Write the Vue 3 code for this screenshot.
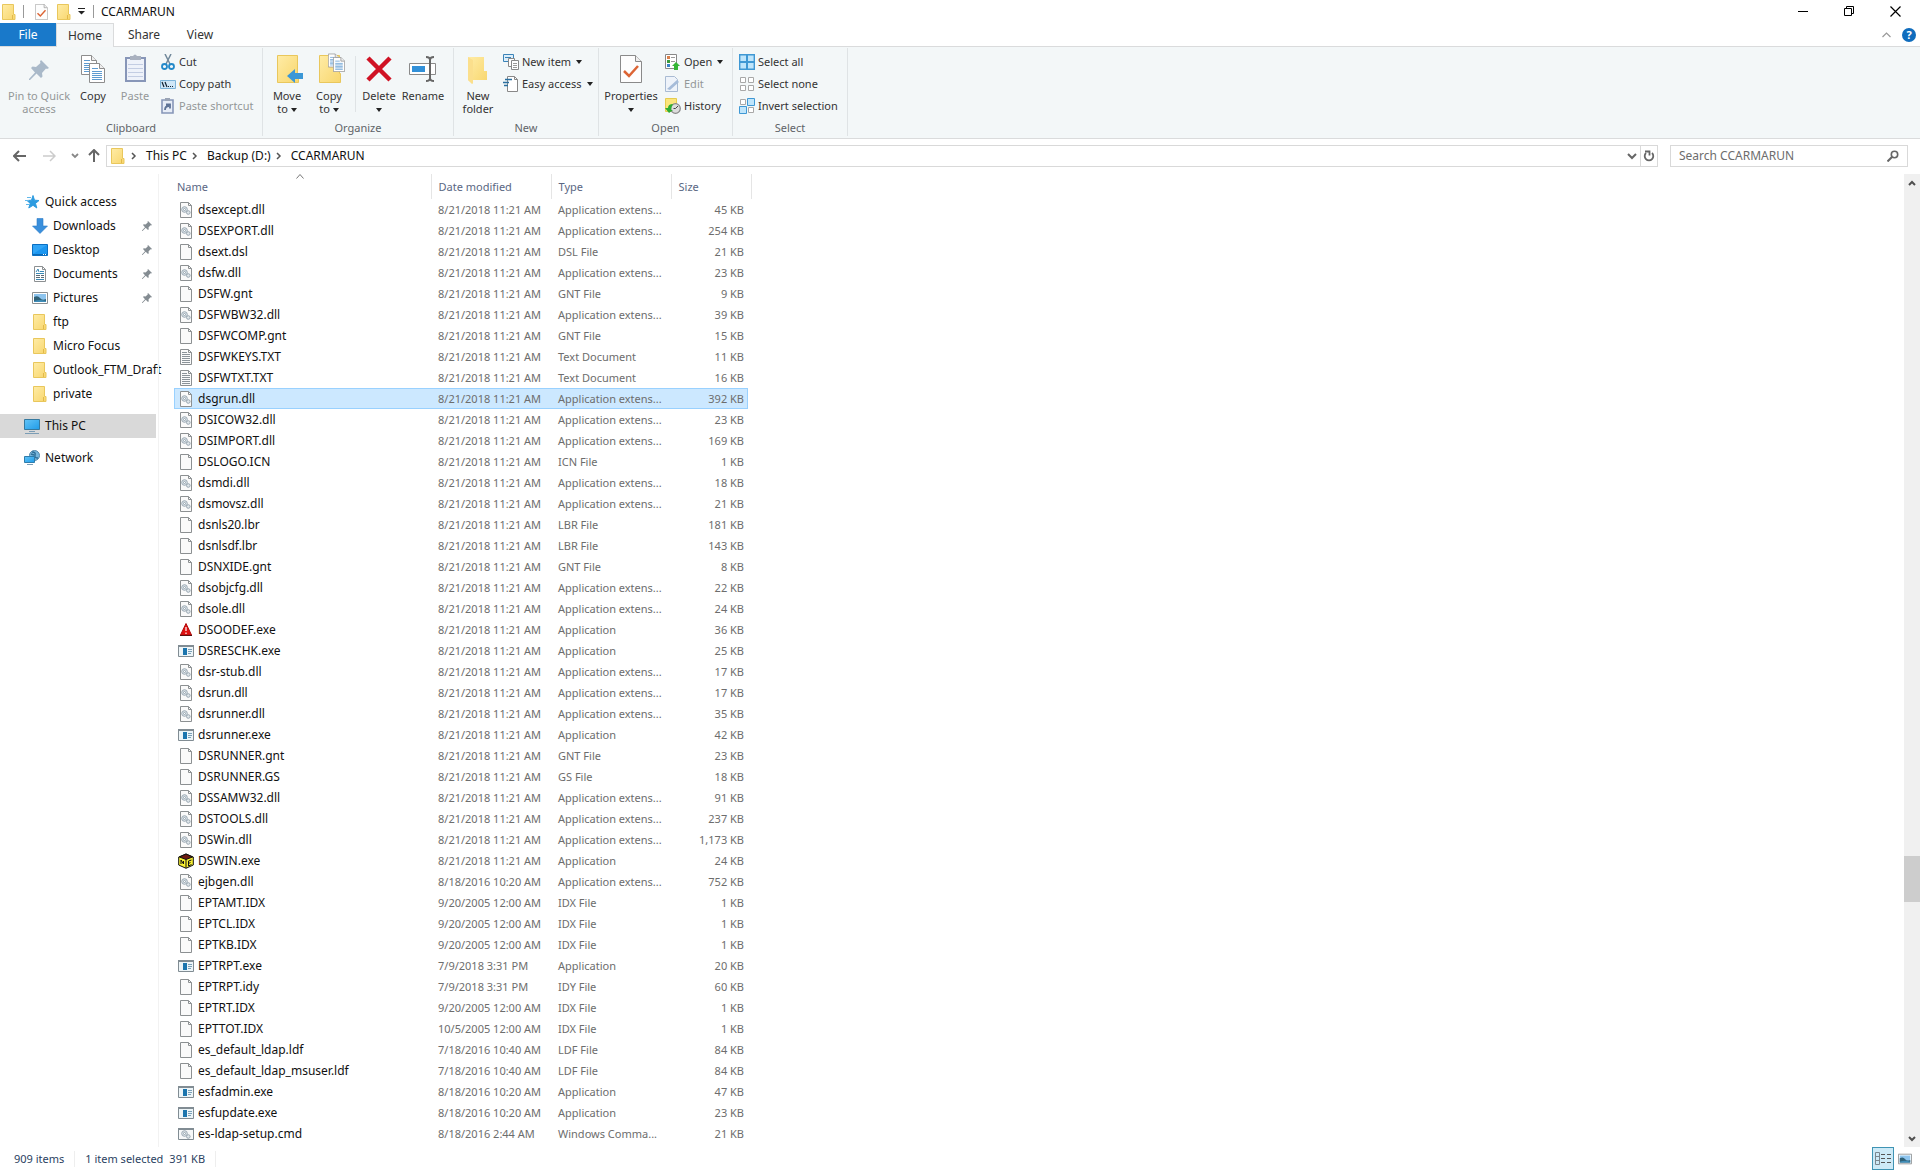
<script setup>
const raw = `dll|dsexcept.dll|a|e|45
dll|DSEXPORT.dll|a|e|254
doc|dsext.dsl|a|DSL File|21
dll|dsfw.dll|a|e|23
doc|DSFW.gnt|a|GNT File|9
dll|DSFWBW32.dll|a|e|39
doc|DSFWCOMP.gnt|a|GNT File|15
txt|DSFWKEYS.TXT|a|Text Document|11
txt|DSFWTXT.TXT|a|Text Document|16
dll|dsgrun.dll|a|e|392
dll|DSICOW32.dll|a|e|23
dll|DSIMPORT.dll|a|e|169
doc|DSLOGO.ICN|a|ICN File|1
dll|dsmdi.dll|a|e|18
dll|dsmovsz.dll|a|e|21
doc|dsnls20.lbr|a|LBR File|181
doc|dsnlsdf.lbr|a|LBR File|143
doc|DSNXIDE.gnt|a|GNT File|8
dll|dsobjcfg.dll|a|e|22
dll|dsole.dll|a|e|24
warn|DSOODEF.exe|a|Application|36
exe|DSRESCHK.exe|a|Application|25
dll|dsr-stub.dll|a|e|17
dll|dsrun.dll|a|e|17
dll|dsrunner.dll|a|e|35
exe|dsrunner.exe|a|Application|42
doc|DSRUNNER.gnt|a|GNT File|23
doc|DSRUNNER.GS|a|GS File|18
dll|DSSAMW32.dll|a|e|91
dll|DSTOOLS.dll|a|e|237
dll|DSWin.dll|a|e|1,173
cube|DSWIN.exe|a|Application|24
dll|ejbgen.dll|8/18/2016 10:20 AM|e|752
doc|EPTAMT.IDX|9/20/2005 12:00 AM|IDX File|1
doc|EPTCL.IDX|9/20/2005 12:00 AM|IDX File|1
doc|EPTKB.IDX|9/20/2005 12:00 AM|IDX File|1
exe|EPTRPT.exe|7/9/2018 3:31 PM|Application|20
doc|EPTRPT.idy|7/9/2018 3:31 PM|IDY File|60
doc|EPTRT.IDX|9/20/2005 12:00 AM|IDX File|1
doc|EPTTOT.IDX|10/5/2005 12:00 AM|IDX File|1
doc|es_default_ldap.ldf|7/18/2016 10:40 AM|LDF File|84
doc|es_default_ldap_msuser.ldf|7/18/2016 10:40 AM|LDF File|84
exe|esfadmin.exe|8/18/2016 10:20 AM|Application|47
exe|esfupdate.exe|8/18/2016 10:20 AM|Application|23
cmd|es-ldap-setup.cmd|8/18/2016 2:44 AM|Windows Comma...|21`
const files = raw.split('\n').map((line) => {
  const [icon, name, date, type, size] = line.split('|')
  return {
    icon,
    name,
    date: date === 'a' ? '8/21/2018 11:21 AM' : date,
    type: type === 'e' ? 'Application extens...' : type,
    size: size + ' KB',
  }
})
const selected = 'dsgrun.dll'
const quick = [
  { icon: 'down', label: 'Downloads', pin: true },
  { icon: 'desk', label: 'Desktop', pin: true },
  { icon: 'docs', label: 'Documents', pin: true },
  { icon: 'pics', label: 'Pictures', pin: true },
  { icon: 'folder', label: 'ftp' },
  { icon: 'folder', label: 'Micro Focus' },
  { icon: 'folder', label: 'Outlook_FTM_Draft' },
  { icon: 'folder', label: 'private' },
]
const crumbs = ['This PC', 'Backup (D:)', 'CCARMARUN']
</script>

<template>
  <div class="window">
    <svg class="defs" width="0" height="0" aria-hidden="true">
      <defs>
        <linearGradient id="gold" x1="0" y1="0" x2="1" y2="1">
          <stop offset="0" stop-color="#ffeca6" /><stop offset="1" stop-color="#f8d66d" />
        </linearGradient>
        <linearGradient id="screen" x1="0" y1="0" x2="1" y2="1">
          <stop offset="0" stop-color="#63c4f7" /><stop offset="1" stop-color="#1f9ce9" />
        </linearGradient>
      </defs>
      <symbol id="folder" viewBox="0 0 16 16">
        <path d="M1.500.5h11v10h1.500v5h-12.500z" fill="url(#gold)" stroke="#e9c75c" />
        <path d="M11.500 11v4" stroke="#e2b94a" fill="none" />
      </symbol>
      <symbol id="doc" viewBox="0 0 16 16">
        <path d="M2.500.5h8l3 3v12h-11z" fill="#fafafa" stroke="#8c9092" />
        <path d="M10.500.5v3h3" fill="none" stroke="#8c9092" />
      </symbol>
      <symbol id="gears" viewBox="0 0 10 9">
        <circle cx="3.500" cy="3.500" r="2.800" fill="#dfe6ea" stroke="#9aa8b3" />
        <circle cx="3.500" cy="3.500" r="1" fill="#fff" stroke="#8798a5" stroke-width=".8" />
        <circle cx="7.300" cy="6.500" r="1.800" fill="#dfe6ea" stroke="#9aa8b3" />
      </symbol>
      <symbol id="dll" viewBox="0 0 16 16">
        <use href="#doc" width="16" height="16" />
        <use href="#gears" x="3" y="4" width="10" height="9" />
      </symbol>
      <symbol id="txt" viewBox="0 0 16 16">
        <use href="#doc" width="16" height="16" />
        <path d="M4 3.500h5M4 5.500h8M4 7.500h8M4 9.500h8M4 11.500h8M4 13.500h8" stroke="#8b9399" />
      </symbol>
      <symbol id="exe" viewBox="0 0 16 16">
        <path d="M.5 2.500h15v11H.5z" fill="#edf5f8" stroke="#818c93" />
        <path d="M0 3h16" stroke="#818c93" stroke-width="2" />
        <path d="M5 5h4v7H5z" fill="#1b75ae" />
        <path d="M10 6.500h4M10 8.500h4M10 10.500h3" stroke="#7aa0b8" />
      </symbol>
      <symbol id="cmd" viewBox="0 0 16 16">
        <path d="M.5 2.500h15v11H.5z" fill="#f6f8f9" stroke="#818c93" />
        <path d="M0 3h16" stroke="#818c93" stroke-width="2" />
        <use href="#gears" x="3" y="4" width="10" height="9" />
      </symbol>
      <symbol id="warn" viewBox="0 0 16 16">
        <path d="M8 1.500 13.500 13h-11z" fill="#e01010" stroke="#b00a0a" />
        <path d="M2 13.500h12" stroke="#5a1010" />
        <path d="M8 5v4M8 10.500v1.500" stroke="#fff" stroke-width="1.200" />
      </symbol>
      <symbol id="cube" viewBox="0 0 16 16">
        <path d="M8 1 15.300 4v8L8 15.300.7 12V4z" fill="#f8f032" stroke="#111" />
        <path d="M8 1 14.500 4 8 6.500 1.500 4z" fill="#6d1a12" stroke="#111" />
        <path d="M8 6.500V15M3 11V7l2.500 4V8M10.500 13V8l3-1M10.500 10.500l2-1M10.500 13l3-1.500" stroke="#111" fill="none" />
      </symbol>
      <symbol id="down" viewBox="0 0 16 16">
        <path d="M5 .5h6V8h4.500L8 15.500.5 8H5z" fill="#3a8fdc" stroke="#2b7cc8" stroke-width=".6" />
      </symbol>
      <symbol id="desk" viewBox="0 0 16 16">
        <path d="M.5 2.500h15v11H.5z" fill="#1b96f0" stroke="#0a6fc2" />
        <path d="M1 3h14L1 12z" fill="#3aabf8" opacity=".7" />
        <path d="M1 12.500h14" stroke="#0b69b5" /><path d="M11 12.500h3" stroke="#fff" stroke-dasharray="1 1" />
      </symbol>
      <symbol id="docs" viewBox="0 0 16 16">
        <path d="M2.500.5h8l3 3v12h-11z" fill="#fff" stroke="#8c9092" />
        <path d="M10.500.5v3h3" fill="none" stroke="#8c9092" />
        <path d="m4 6 2-3 1 3M8 5.500h4M4 7.500h8M4 13.500h8" stroke="#3a89b5" fill="none" />
        <path d="M4 9.500h4M9 9.500h3M4 11.500h4M9 11.500h3" stroke="#596a75" />
      </symbol>
      <symbol id="pics" viewBox="0 0 16 16">
        <path d="M.5 2.500h15v11H.5z" fill="#fff" stroke="#8c9092" />
        <path d="M2 4h12v8H2z" fill="#8dc4ee" /><path d="M2 7q4-2 6 1t6 1v3H2z" fill="#2f6076" />
        <path d="M2 11q6-2 12 0v1H2z" fill="#3f8db8" />
      </symbol>
      <symbol id="star" viewBox="0 0 16 16">
        <path d="m9 1.500 1.500 4.700 4.500.3-3.500 2.900 1.300 4.600L9 11.300 4.800 14l1.400-4.600L3 6.500l4.500-.3z" fill="#2d9be0" stroke="#2d9be0" />
        <path d="M3 3.500h4M1 6.500h4M2 10.500h4" stroke="#62b8ea" />
      </symbol>
      <symbol id="pc" viewBox="0 0 16 16">
        <path d="M.5 1.500h15v10H.5z" fill="url(#screen)" stroke="#35799f" />
        <path d="M5 13.500h6M1 15.500h14" stroke="#7c9db5" />
      </symbol>
      <symbol id="net" viewBox="0 0 16 16">
        <circle cx="10.500" cy="5.500" r="5" fill="#77b6dc" stroke="#5488aa" />
        <path d="M8 2q4 0 3 3t3 3M7 4l3 1" stroke="#2f6f98" fill="none" stroke-width="1.500" />
        <path d="M.5 6.500h10v6H.5z" fill="url(#screen)" stroke="#2f7cab" /><path d="M3 14.500h6" stroke="#7c9db5" />
      </symbol>
      <symbol id="pin" viewBox="0 0 20 20">
        <path d="m12 0 8 8-2 1-1-.5-4 4.500.5 3.500-1.500 1.500-4.500-4.500L1 20H0v-1l6-6.500L2 8l1.500-1.500L7 7l4.500-4-.5-1.500z" />
      </symbol>
      <symbol id="propdoc" viewBox="0 0 22 28">
        <path d="M.5.5h15l6 6v21H.5z" fill="#fdfdfd" stroke="#8a8a8a" />
        <path d="M15.500.5v6h6" fill="#eee" stroke="#8a8a8a" />
        <path d="m4 16 5 5 9-10" fill="none" stroke="#dc6434" stroke-width="2.500" />
      </symbol>
      <symbol id="page" viewBox="0 0 16 20">
        <path d="M.5.5h10l5 5v14H.5z" fill="#fff" stroke="#8d8d8d" />
        <path d="M10.500.5v5h5" fill="#eee" stroke="#8d8d8d" />
        <path d="M3 5.500h6M3 8.500h10M3 10.500h10M3 12.500h10M3 14.500h10M3 16.500h10" stroke="#5e9bd0" />
      </symbol>
      <symbol id="chev" viewBox="0 0 6 8"><path d="m1 1 3 3-3 3" fill="none" stroke="#555" stroke-width="1.500" /></symbol>
      <symbol id="tri" viewBox="0 0 6 4"><path d="M0 0h6L3 4z" fill="#222" /></symbol>
    </svg>

    <header class="titlebar">
      <svg class="i16"><use href="#folder" /></svg>
      <span class="tick tick-a"></span>
      <button class="qa" aria-label="Properties"><svg width="13" height="16" viewBox="0 0 22 28"><use href="#propdoc" /></svg></button>
      <button class="qa" aria-label="New folder"><svg class="i16"><use href="#folder" /></svg></button>
      <button class="qa-menu" aria-label="Customize"><svg width="7" height="7"><path d="M0 .5h7" stroke="#222" /><path d="M0 3h7L3.500 6.500z" fill="#222" /></svg></button>
      <span class="tick"></span>
      <h1>CCARMARUN</h1>
      <div class="controls">
        <button aria-label="Minimize"><svg width="11" height="11"><path d="M0 5.500h10" stroke="#000" /></svg></button>
        <button aria-label="Restore"><svg width="11" height="11" fill="none" stroke="#000"><path d="M.5 2.500h7v7h-7zM2.500 2V.5h7v7H8" /></svg></button>
        <button aria-label="Close"><svg width="11" height="11"><path d="m.5.5 10 10M10.500.5l-10 10" stroke="#000" stroke-width="1.200" /></svg></button>
      </div>
    </header>

    <nav class="tabs">
      <button class="tab file">File</button>
      <button class="tab active">Home</button>
      <button class="tab">Share</button>
      <button class="tab">View</button>
      <div class="tab-right">
        <button aria-label="Collapse ribbon"><svg width="9" height="6"><path d="m.5 5 4-4 4 4" fill="none" stroke="#999" stroke-width="1.200" /></svg></button>
        <button class="help" aria-label="Help">?</button>
      </div>
    </nav>

    <section class="ribbon">
      <div class="group g-clip">
        <div class="tools">
          <button class="big w62 off"><svg width="32" height="32"><use href="#pin" x="6" y="7" width="20" height="20" fill="#a9b9c9" /></svg><span>Pin to Quick<br />access</span></button>
          <button class="big w46"><svg width="32" height="32"><use href="#page" x="4" y="2" width="16" height="20" /><use href="#page" x="12" y="10" width="16" height="20" /></svg><span>Copy</span></button>
          <button class="big w38 off"><svg width="32" height="32"><path d="M7 5h19v23H7z" fill="#eef2fa" stroke="#8796b8" stroke-width="2" /><path d="M11 3h3q2-3 4 0h4v4H11z" fill="#a9b1bf" /><path d="M9 11.500h15M9 15.500h15M9 19.500h15M9 23.500h15" stroke="#c3cde3" /></svg><span>Paste</span></button>
          <div class="small-col">
            <button class="small"><svg class="i16"><path d="M5 0l5 10M11 0 6 10" stroke="#71899b" stroke-width="1.500" /><circle cx="4.500" cy="12.500" r="2.500" fill="none" stroke="#2389c9" stroke-width="1.800" /><circle cx="11.500" cy="12.500" r="2.500" fill="none" stroke="#2389c9" stroke-width="1.800" /></svg>Cut</button>
            <button class="small"><svg class="i16"><path d="M.5 4.500h15v8H.5z" fill="#cfe7f8" stroke="#7db4da" /><path d="m2 6 2 5M5 6l2 5" stroke="#123" stroke-width="1.200" /><path d="M8 10.500h6" stroke="#123" stroke-dasharray="1 1" /></svg>Copy path</button>
            <button class="small off"><svg class="i16"><path d="M2 2h11v13H2z" fill="#e7edf7" stroke="#8796b8" stroke-width="1.600" /><path d="M5 0h5v3H5z" fill="#9aa4b5" /><path d="M5 12q0-4 4-4M6 6.500h4v4" fill="none" stroke="#5e7396" stroke-width="1.800" /></svg>Paste shortcut</button>
          </div>
        </div>
        <p class="caption">Clipboard</p>
      </div>

      <div class="group g-org">
        <div class="tools">
          <button class="big w48"><svg width="32" height="32"><path d="M6.500 2.500h20v18h1v9h-21z" fill="url(#gold)" stroke="#e9c75c" /><path d="m16 23 8-7v4h8v6h-8v4z" fill="#3b97d6" /></svg><span>Move<br />to <svg class="tri"><use href="#tri" /></svg></span></button>
          <button class="big w36"><svg width="32" height="32"><path d="M6.500 2.500h20v18h1v9h-21z" fill="url(#gold)" stroke="#e9c75c" /><use href="#page" x="15" y="0" width="11" height="15" /><use href="#page" x="20" y="4" width="12" height="15" /></svg><span>Copy<br />to <svg class="tri"><use href="#tri" /></svg></span></button>
          <span class="inner-line"></span>
          <button class="big w40"><svg width="32" height="32"><path d="m5 5 22 22M27 5 5 27" stroke="#d01224" stroke-width="4.500" /></svg><span>Delete<br /><svg class="tri"><use href="#tri" /></svg></span></button>
          <button class="big w48"><svg width="32" height="32"><path d="M2.500 10.500h26v11h-26z" fill="#fff" stroke="#8a8a8a" /><path d="M5 13h13v6H5z" fill="#3190d8" /><path d="M19 4q4 0 4 3 0-3 4-3M23 6v21M19 28q4 0 4-3 0 3 4 3" fill="none" stroke="#666" stroke-width="2" /></svg><span>Rename</span></button>
        </div>
        <p class="caption">Organize</p>
      </div>

      <div class="group g-new">
        <div class="tools">
          <button class="big w48"><svg width="32" height="32"><path d="M6 4h16v14h3v9H11l-1 4-4-4z" fill="url(#gold)" /><path d="m6 4 5 3v24l-5-4z" fill="#fbdf8c" /></svg><span>New<br />folder</span></button>
          <div class="small-col tight">
            <button class="small"><svg class="i16"><path d="M.5.5h10v7H.5z" fill="#dceefa" stroke="#3a83b8" /><path d="M2 3.500h6" stroke="#3a83b8" /><path d="M5.500 4.500h6v8h-6z" fill="#fff" stroke="#888" /><path d="M8.500 6.500h7v9h-7z" fill="#fff" stroke="#888" /><path d="M10 9.500h4M10 11.500h4M10 13.500h4" stroke="#999" /></svg>New item<svg class="tri"><use href="#tri" /></svg></button>
            <button class="small"><svg class="i16"><path d="M4.500.5h7l3 3v12h-10z" fill="#fff" stroke="#888" /><path d="M11.500.5v3h3" fill="none" stroke="#888" /><path d="M2 3.500h7M0 6.500h6M1 9.500h4" stroke="#2b6f9f" stroke-width="1.400" /></svg>Easy access<svg class="tri"><use href="#tri" /></svg></button>
          </div>
        </div>
        <p class="caption">New</p>
      </div>

      <div class="group g-open">
        <div class="tools">
          <button class="big w56"><svg width="32" height="32"><use href="#propdoc" x="5" y="2" width="22" height="28" /></svg><span>Properties<br /><svg class="tri"><use href="#tri" /></svg></span></button>
          <div class="small-col">
            <button class="small"><svg class="i16"><path d="M.5.5h11v14H.5z" fill="#fff" stroke="#888" /><path d="M2 2h3v3H2z" fill="#d97f4a" /><path d="M2 6h3v3H2z" fill="#3a9b3f" /><path d="M2 10h3v3H2z" fill="#3a83c8" /><path d="M6 3.500h4M6 7.500h4" stroke="#999" /><path d="m11 8 4 4h-2v4H9v-4H7z" fill="#35b535" /></svg>Open<svg class="tri"><use href="#tri" /></svg></button>
            <button class="small off"><svg class="i16"><path d="M.5.5h9l3 3v12H.5z" fill="#eef3fa" stroke="#a9bbd3" /><path d="m2 13 10-9 2 2-9 8z" fill="#a6bcd9" /></svg>Edit</button>
            <button class="small"><svg class="i16"><path d="M.5.5h11v13H.5z" fill="#fbe57c" stroke="#e6cc4f" /><circle cx="10.500" cy="10.500" r="4.800" fill="#ddd" stroke="#888" stroke-width="1.200" /><path d="M10.500 10.500 13 8M10.500 10.500h-2" stroke="#444" /><path d="M0 10h3q0-4 5-4-2 3-2 6h2l-4 3z" fill="#2fae32" /></svg>History</button>
          </div>
        </div>
        <p class="caption">Open</p>
      </div>

      <div class="group g-sel">
        <div class="tools">
          <div class="small-col">
            <button class="small"><svg class="i16"><path d="M.7.7h14.600v14.600H.7z" fill="#bfe5fb" stroke="#3f98d4" stroke-width="1.400" /><path d="M8 0v16M0 8h16" stroke="#3f98d4" stroke-width="2" /></svg>Select all</button>
            <button class="small"><svg class="i16" fill="#fff" stroke="#a8a8a8"><path d="M1.500 1.500h5v5h-5zM9.500 1.500h5v5h-5zM1.500 9.500h5v5h-5zM9.500 9.500h5v5h-5z" /></svg>Select none</button>
            <button class="small"><svg class="i16"><path d="M1.500 1.500h5v5h-5zM9.500 9.500h5v5h-5z" fill="#fff" stroke="#a8a8a8" /><path d="M8.500.5h7v7h-7zM.5 8.500h7v7h-7z" fill="#bfe5fb" stroke="#3f98d4" /></svg>Invert selection</button>
          </div>
        </div>
        <p class="caption">Select</p>
      </div>
    </section>

    <div class="addressbar">
      <div class="nav">
        <button aria-label="Back"><svg width="14" height="12" fill="none" stroke="#666" stroke-width="2"><path d="M1 6h12M6 1 1 6l5 5" /></svg></button>
        <button aria-label="Forward"><svg width="14" height="12" fill="none" stroke="#ccc" stroke-width="1.500"><path d="M1 6h12M8 1l5 5-5 5" /></svg></button>
        <button class="recent" aria-label="Recent"><svg width="8" height="6" fill="none" stroke="#888" stroke-width="1.800"><path d="m1 1 3 3 3-3" /></svg></button>
        <button aria-label="Up"><svg width="12" height="14" fill="none" stroke="#666" stroke-width="2"><path d="M6 1v12M1 6l5-5 5 5" /></svg></button>
      </div>
      <div class="path">
        <svg class="i16"><use href="#folder" /></svg>
        <template v-for="c in crumbs" :key="c">
          <svg class="sep"><use href="#chev" /></svg><a href="#">{{ c }}</a>
        </template>
        <button class="drop" aria-label="Previous locations"><svg width="10" height="7" fill="none" stroke="#666" stroke-width="2"><path d="m1 1 4 4 4-4" /></svg></button>
        <button class="refresh" aria-label="Refresh"><svg width="12" height="12" fill="none" stroke="#666" stroke-width="1.800"><path d="M9 3a4.300 4.300 0 1 1-6 0" /><path d="M2 1.500h4.500v4" /></svg></button>
      </div>
      <label class="search">
        <input type="text" placeholder="Search CCARMARUN" aria-label="Search CCARMARUN" />
        <svg width="12" height="12" fill="none" stroke="#666" stroke-width="1.600"><circle cx="7.500" cy="4.500" r="3.200" /><path d="M5 7 .5 11.500" stroke-width="2" /></svg>
      </label>
    </div>

    <main class="body">
      <aside class="side">
        <a href="#" class="item root"><svg class="i16"><use href="#star" /></svg>Quick access</a>
        <a v-for="q in quick" :key="q.label" href="#" class="item">
          <svg class="i16"><use :href="'#' + q.icon" /></svg>{{ q.label }}
          <svg v-if="q.pin" class="pinned"><use href="#pin" /></svg>
        </a>
        <a href="#" class="item root spaced current"><svg class="i16"><use href="#pc" /></svg>This PC</a>
        <a href="#" class="item root spaced"><svg class="i16"><use href="#net" /></svg>Network</a>
      </aside>

      <div class="list">
        <table>
          <colgroup><col class="c-name" /><col class="c-date" /><col class="c-type" /><col class="c-size" /></colgroup>
          <thead>
            <tr>
              <th>Name<svg class="sort" width="8" height="5"><path d="m.5 4.500 3.500-4 3.500 4" fill="none" stroke="#777" /></svg></th>
              <th>Date modified</th>
              <th>Type</th>
              <th>Size</th>
            </tr>
          </thead>
          <tbody>
            <tr v-for="f in files" :key="f.name" :class="{ selected: f.name === selected }">
              <td><div class="name"><svg class="i16"><use :href="'#' + f.icon" /></svg>{{ f.name }}</div></td>
              <td>{{ f.date }}</td>
              <td>{{ f.type }}</td>
              <td class="size">{{ f.size }}</td>
            </tr>
            <tr>
              <td colspan="4"><div class="name"><svg class="i16"><use href="#doc" /></svg></div></td>
            </tr>
          </tbody>
        </table>
      </div>

      <div class="scroll">
        <button aria-label="Scroll up"><svg width="8" height="6"><path d="m1 5 3-3 3 3" fill="none" stroke="#505050" stroke-width="2" /></svg></button>
        <div class="track"><div class="thumb"></div></div>
        <button aria-label="Scroll down"><svg width="8" height="6"><path d="m1 1 3 3 3-3" fill="none" stroke="#505050" stroke-width="2" /></svg></button>
      </div>
    </main>

    <footer class="status">
      <span class="cell">909 items</span>
      <span class="cell"><span>1 item selected</span><span>391 KB</span></span>
      <div class="views">
        <button class="on" aria-label="Details"><svg width="16" height="14" fill="none" stroke="#7b8790"><path d="M.5.5h4v12h-4zM.5 4.500h4M.5 8.500h4" /><path d="M6 2.500h10M6 6.500h10M6 10.500h10" stroke="#555" stroke-dasharray="4 2" /></svg></button>
        <button aria-label="Large icons"><svg width="14" height="14"><use href="#pics" width="14" height="14" /></svg></button>
      </div>
    </footer>
  </div>
</template>

<style>
body { background: #fff; overflow: hidden; }
</style>

<style scoped>
.window { height: 100vh; display: flex; flex-direction: column; background: #fff; color: #111; font: 12px/16px "Noto Sans", "Open Sans", sans-serif; }
.defs { display: block; height: 0; width: 0; flex: none; }
button { font: inherit; color: inherit; background: none; border: 0; padding: 0; display: flex; align-items: center; justify-content: center; }
a { color: inherit; text-decoration: none; }
svg { flex: none; display: block; }
.i16 { width: 16px; height: 16px; }
.tri { width: 6px; height: 4px; display: inline-block; vertical-align: middle; }
h1, p { margin: 0; font: inherit; }

.titlebar { height: 23px; display: flex; align-items: center; padding-left: 1px; }
.tick { width: 1px; height: 13px; background: #999; }
.tick-a { margin: 0 11px 0 6px; }
.qa { margin-right: 8px; }
.qa-menu { margin: 0 8px 0 -2px; }
.titlebar h1 { margin-left: 7px; }
.controls { margin-left: auto; display: flex; padding-right: 2px; }
.controls button { width: 46px; height: 21px; }

.tabs { height: 23px; display: flex; border-bottom: 1px solid #dadbdc; }
.tab { width: 56px; height: 23px; color: #333; }
.file { background: #1979ca; color: #fff; }
.active { width: 58px; height: 24px; margin-right: 2px; background: #f5f7f8; border: 1px solid #dadbdc; border-bottom: 0; }
.tab-right { margin-left: auto; display: flex; align-items: center; gap: 11px; padding-right: 4px; }
.help { width: 14px; height: 14px; border-radius: 50%; background: #0f6cbd; color: #fff; font-weight: 700; font-size: 11px; }

.ribbon { height: 91px; display: flex; background: #f3f7f8; border-bottom: 1px solid #dadbdc; color: #333; font-size: 11px; }
.group { display: flex; flex-direction: column; border-right: 1px solid #dfe3e5; margin: 1px 0 2px; }
.g-clip { width: 262px; }
.g-org { width: 190px; }
.g-new { width: 144px; }
.g-open { width: 133px; }
.g-sel { width: 114px; }
.g-clip .tools { padding-left: 8px; }
.g-open .tools { padding-left: 4px; }
.tools { flex: 1; display: flex; padding-top: 3px; }
.big { flex-direction: column; justify-content: flex-start; align-self: flex-start; margin-top: 2px; line-height: 13px; white-space: nowrap; }
.big > svg { width: 32px; height: 32px; margin-bottom: 4px; overflow: visible; }
.w36 { width: 36px; } .w38 { width: 38px; } .w40 { width: 40px; } .w46 { width: 46px; }
.w48 { width: 48px; } .w56 { width: 56px; } .w62 { width: 62px; }
.off { color: #939799; }
.inner-line { width: 1px; height: 56px; background: #dfe3e5; margin: 5px 3px 0 8px; }
.small-col { display: flex; flex-direction: column; padding-left: 6px; }
.tight { padding-left: 1px; }
.small { height: 22px; justify-content: flex-start; gap: 3px; white-space: nowrap; }
.small .tri { margin-left: 2px; }
.caption { text-align: center; color: #5f6468; }

.addressbar { display: flex; padding: 6px 12px 7px 13px; }
.nav { display: flex; align-items: center; gap: 15px; width: 93px; }
.recent { margin-right: -6px; }
.path { flex: 1; display: flex; align-items: stretch; border: 1px solid #d9d9d9; height: 20px; padding-left: 3px; }
.path > * { align-self: center; }
.path a { line-height: 20px; }
.sep { width: 6px; height: 8px; margin: 0 9px 0 5px; }
.drop { margin-left: auto; width: 16px; }
.path .refresh { width: 17px; border-left: 1px solid #d9d9d9; align-self: stretch; }
.search { margin-left: 12px; border: 1px solid #d9d9d9; display: flex; align-items: center; padding-right: 8px; width: 228px; }
.search input { flex: 1; border: 0; outline: 0; background: none; font: inherit; padding: 0 8px; min-width: 0; }
.search input::placeholder { color: #6d6d6d; opacity: 1; }

.body { flex: 1; min-height: 0; display: flex; }
.side { width: 156px; flex: none; padding-top: 16px; margin-right: 2px; }
.item { display: flex; align-items: center; gap: 5px; height: 24px; padding-left: 32px; white-space: nowrap; }
.root { padding-left: 24px; }
.spaced { margin-top: 8px; }
.current { background: #d9d9d9; }
.pinned { width: 10px; height: 10px; margin: 0 4px 0 auto; fill: #848c92; }
.list { flex: 1; overflow: hidden; border-left: 1px solid #f2f2f2; padding-left: 15px; }
table { border-collapse: collapse; table-layout: fixed; width: 574px; font-size: 11px; }
.c-name { width: 257px; } .c-date { width: 120px; } .c-type { width: 120px; } .c-size { width: 77px; }
th { height: 25px; padding: 0 0 0 7px; text-align: left; font-weight: 400; color: #5a6783; border-right: 1px solid #e5e5e5; position: relative; }
th:first-child { padding-left: 3px; }
th:last-child { border-right: 0; }
th:last-child::after { content: ""; position: absolute; top: 0; bottom: 0; right: -4px; width: 1px; background: #e5e5e5; }
.sort { position: absolute; left: calc(50% - 6px); top: 0; }
tbody tr { height: 21px; }
td { padding: 0 0 0 7px; color: #6d6d6d; white-space: nowrap; }
td:first-child { padding-left: 4px; color: #111; font-size: 12px; }
.name { display: flex; align-items: center; gap: 4px; }
td.size { text-align: right; padding-right: 4px; }
.selected { background: #cce8ff; outline: 1px solid #99d1ff; outline-offset: -1px; }

.scroll { width: 16px; display: flex; flex-direction: column; background: #f0f0f0; }
.scroll button { height: 17px; }
.track { flex: 1; display: grid; grid-template-rows: 665fr 46fr 228fr; }
.thumb { grid-row: 2; background: #cdcdcd; }

.status { height: 23px; display: flex; align-items: center; padding-left: 14px; color: #2b3f5f; font-size: 11px; }
.cell { display: flex; gap: 6px; padding-right: 10px; border-right: 1px solid #eee; margin-right: 10px; }
.views { margin-left: auto; display: flex; gap: 4px; padding-right: 8px; }
.views button { height: 23px; }
.views .on { width: 22px; background: #cdeaf7; border: 1px solid #3f94b4; }
</style>
